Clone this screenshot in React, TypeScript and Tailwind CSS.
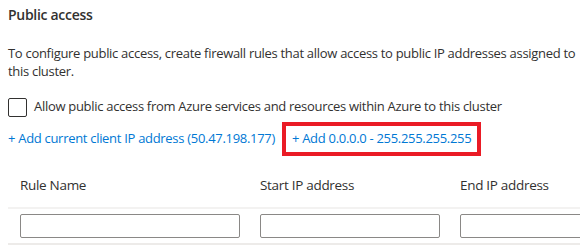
import React from "react";

export default function App() {
  return (
    <div
      className="w-[580px] h-[245px] bg-white overflow-hidden text-[#323130] text-[13px] tracking-[-0.3px]"
      style={{ fontFamily: '"Open Sans", "Noto Sans", sans-serif' }}
    >
      <div className="pl-2 pt-[5px]">
        <div className="text-[14px] font-semibold leading-[20px] h-[20px]">Public access</div>
        <p className="mt-[19px] leading-[18px] pr-1">
          To configure public access, create firewall rules that allow access to public IP addresses assigned to
          this cluster.
        </p>
        <label className="mt-[17px] flex items-center gap-[7px] h-[20px]">
          <span className="w-[19px] h-[19px] border border-[#323130] rounded-[2px] shrink-0" />
          <span>Allow public access from Azure services and resources within Azure to this cluster</span>
        </label>
        <div className="mt-[5px] flex items-center h-[34px] text-[#0078d4]">
          <span>+ Add current client IP address (50.47.198.177)</span>
          <span className="ml-[7px] border-[4px] border-[#ea1b25] h-[34px] flex items-center px-[6px]">
            + Add 0.0.0.0 - 255.255.255.255
          </span>
        </div>
      </div>
      <div className="mt-[7px] flex pl-5 gap-5 h-[44px] items-center text-[13.5px]">
        <div className="w-[220px] shrink-0">Rule Name</div>
        <div className="w-[180px] shrink-0">Start IP address</div>
        <div className="w-[180px] shrink-0">End IP address</div>
      </div>
      <div className="ml-2 border-t-2 border-[#f3f2f1] border-b-[3px] border-b-[#edebe9] flex pl-3 gap-5 pt-[5px] pb-[5px]">
        <input className="w-[220px] h-[24px] border border-[#8a8886] rounded-[2px] shrink-0 outline-none" />
        <input className="w-[180px] h-[24px] border border-[#8a8886] rounded-[2px] shrink-0 outline-none" />
        <input className="w-[180px] h-[24px] border border-[#8a8886] rounded-[2px] shrink-0 outline-none" />
      </div>
    </div>
  );
}
